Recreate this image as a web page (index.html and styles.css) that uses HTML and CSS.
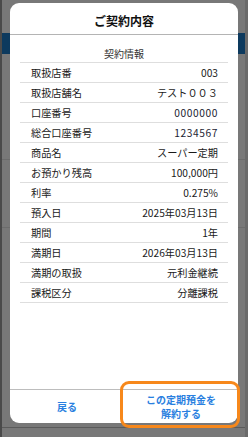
FILE: index.html
```html
<!DOCTYPE html>
<html lang="ja">
<head>
    <meta charset="UTF-8">
    <title>ご契約内容</title>
    <link rel="stylesheet" href="styles.css">
</head>
<body>
<div class="page">
    <div class="page-top"></div>
    <div class="page-nav"></div>
    <div class="page-row h1"></div>
    <div class="page-row h2"></div>
    <div class="page-row h3"></div>
</div>

<div class="modal">
    <div class="modal-title">ご契約内容</div>
    <div class="modal-body">
        <div class="sec-head">契約情報</div>
        <ul class="info">
            <li><span>取扱店番</span><span>003</span></li>
            <li><span>取扱店舗名</span><span>テスト００３</span></li>
            <li><span>口座番号</span><span class="num">0000000</span></li>
            <li><span>総合口座番号</span><span class="num">1234567</span></li>
            <li><span>商品名</span><span>スーパー定期</span></li>
            <li><span>お預かり残高</span><span>100,000円</span></li>
            <li><span>利率</span><span>0.275%</span></li>
            <li><span>預入日</span><span>2025年03月13日</span></li>
            <li><span>期間</span><span>1年</span></li>
            <li><span>満期日</span><span>2026年03月13日</span></li>
            <li><span>満期の取扱</span><span>元利金継続</span></li>
            <li><span>課税区分</span><span>分離課税</span></li>
        </ul>
    </div>
    <div class="modal-foot">
        <a class="btn">戻る</a>
        <a class="btn">この定期預金を<br>解約する</a>
    </div>
</div>
<div class="mark"></div>
</body>
</html>
```

FILE: styles.css
```css
html,body,div,ul,li{margin:0;padding:0;}
ul{list-style-type:none;}
body{background:#787878;font-family:"Noto Sans CJK JP","Liberation Sans",sans-serif;color:#1a1a1a;width:248px;height:437px;overflow:hidden;position:relative;}

.page{height:437px;border-left:2px solid #4a4a4a;border-right:3px solid #6a6a6a;box-sizing:border-box;}
.page-top{height:33px;}
.page-nav{height:21px;background:#0d3a5e;}
.page-row{border-bottom:1px solid #6c6c6c;}
.page-row.h1{height:105px;}
.page-row.h2{height:67px;}
.page-row.h3{height:199px;border-bottom-color:#5a5a5a;}

.modal{position:absolute;left:10px;top:3px;width:228px;height:420px;background:#fff;border-radius:9px;display:flex;flex-direction:column;overflow:hidden;}
.modal-title{height:27px;padding-top:4px;line-height:27px;text-align:center;font-size:12px;font-weight:700;color:#111;border-bottom:1px solid #b4b4b4;}
.modal-body{flex:1;padding:0 10px;}
.sec-head{height:28px;line-height:16px;padding-top:11px;box-sizing:border-box;text-align:center;font-size:10px;color:#333;border-bottom:1px solid #dedede;}
.info li{display:flex;justify-content:space-between;height:19px;line-height:19px;padding:0 10px 0 11px;font-size:10.2px;border-bottom:1px solid #dedede;}
.info .num{color:#1c2433;letter-spacing:0.6px;}

.modal-foot{height:33px;border-top:1px solid #bdbdbd;display:flex;}
.btn{flex:1;display:flex;align-items:center;justify-content:center;text-align:center;font-size:10px;line-height:14px;font-weight:700;color:#2a7fe0;cursor:pointer;}
.btn:last-child{padding-top:1px;}

.mark{position:absolute;left:120px;top:381px;width:114px;height:41px;border:3.5px solid #f7881b;border-radius:9px;}
```
